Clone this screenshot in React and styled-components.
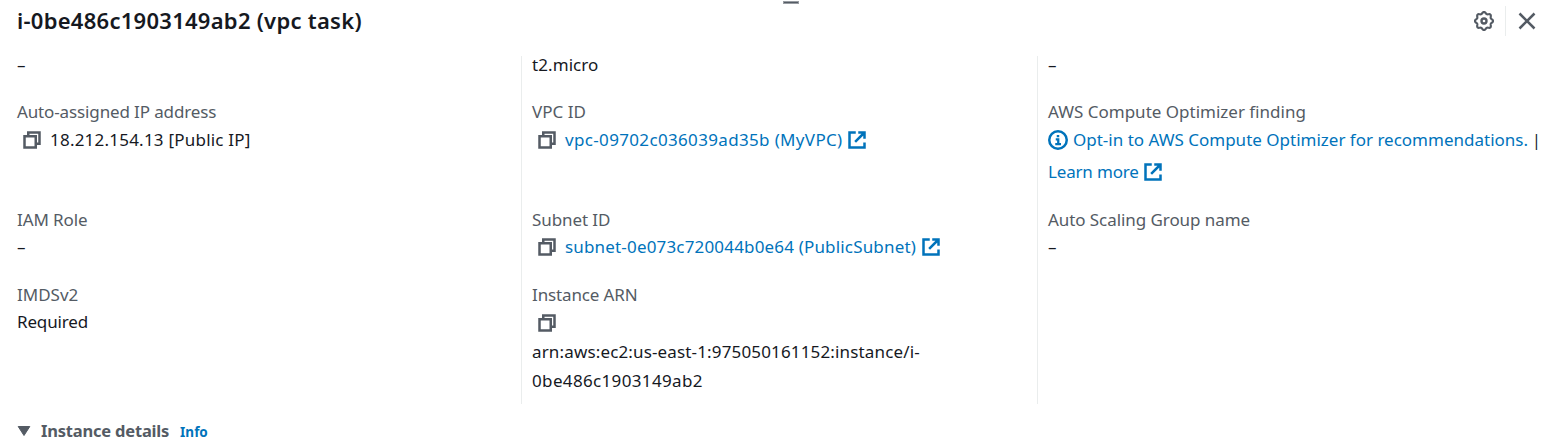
import React from 'react';
import styled, { createGlobalStyle } from 'styled-components';

const GlobalStyle = createGlobalStyle`
  *, *::before, *::after { box-sizing: border-box; }
  body {
    margin: 0;
    background: #ffffff;
    color: #16191f;
    font-family: "Noto Sans", "Open Sans", sans-serif;
    font-size: 17px;
    line-height: 27.5px;
    overflow: hidden;
  }
`;

const Panel = styled.section`
  height: 440px;
  display: flex;
  flex-direction: column;
  position: relative;
`;

const DragHandle = styled.div`
  position: absolute;
  top: 1px;
  left: 783px;
  width: 16px;
  height: 3px;
  background: #545b64;
  border: 1px solid #989ca2;
`;

const Header = styled.header`
  display: flex;
  flex: none;
  align-items: center;
  height: 42px;
  padding: 0 16px 0 17px;
`;

const Title = styled.h2`
  margin: 0;
  flex: 1;
  font-size: 22px;
  font-weight: 600;
  letter-spacing: 0.27px;
`;

const Actions = styled.div`
  display: flex;
  align-items: center;
`;

const ActionDivider = styled.span`
  width: 1px;
  height: 30px;
  margin: 0 11px;
  background: #eaeded;
`;

const Columns = styled.div`
  display: grid;
  flex: none;
  grid-template-columns: 504px 516px 1fr;
  height: 348px;
  margin: 14px 0 0 17px;
`;

const Column = styled.div`
  display: flex;
  flex-direction: column;
  gap: 20px;
  padding-left: ${(p) => (p.$divided ? 10 : 0)}px;
  border-left: ${(p) => (p.$divided ? '1px solid #eaeded' : 'none')};
`;

const Field = styled.div`
  flex: none;
  height: ${(p) => p.$height || 55}px;
`;

const Label = styled.div`
  color: #545b64;
  letter-spacing: ${(p) => p.$track || 0}px;
`;

const Value = styled.div`
  display: flex;
  align-items: center;
  height: ${(p) => p.$line || 26.5}px;
  line-height: ${(p) => p.$line || 26.5}px;
  white-space: nowrap;
`;

const Text = styled.span`
  letter-spacing: ${(p) => p.$track || 0}px;
`;

const Separator = styled.span`
  margin-left: 4px;
  font-size: 16px;
`;

const Link = styled.a`
  color: #0073bb;
  text-decoration: none;
  letter-spacing: ${(p) => p.$track || 0}px;
`;

const Icon = styled.svg`
  flex: none;
  width: 20px;
  height: 20px;
  margin: ${(p) => p.$margin || '0'};
  fill: none;
  stroke: ${(p) => p.$color || '#545b64'};
  stroke-width: 2;
`;

const Section = styled.div`
  display: flex;
  flex: none;
  align-items: center;
  height: 18px;
  margin-top: 18px;
  padding-left: 17px;
  line-height: 18px;
`;

const SectionTitle = styled.h3`
  margin: 0 11px 0 10px;
  font-size: 16.5px;
  font-weight: 700;
  color: #545b64;
  letter-spacing: -0.2px;
`;

const InfoLink = styled.a`
  padding-top: 2px;
  color: #0073bb;
  font-size: 13.5px;
  font-weight: 700;
  line-height: 16px;
`;

const CopyIcon = () => (
  <Icon viewBox="0 0 16 16" $margin="1px 8px 0 5px">
    <path d="M2 5h9v9H2z" />
    <path d="M5 5V2h9v9h-3" />
  </Icon>
);

const ExternalIcon = ({ gap = 4 }) => (
  <Icon viewBox="0 0 16 16" $color="#0073bb" $margin={`1px 0 0 ${gap}px`}>
    <path d="M7 2H2v12h12V10" />
    <path d="M9 2h5v5M14 2 6.500 9.500" />
  </Icon>
);

const InfoIcon = () => (
  <Icon viewBox="0 0 16 16" $color="#0073bb" $margin="1px 5px 0 0">
    <circle cx="8" cy="8" r="7" />
    <path d="M6.200 7.500h2v4M5.800 11.200h4.600M7 4.800h2" strokeWidth="1.800" />
  </Icon>
);

// Eight rounded lobes around the centre of a 16-unit box.
const gearOutline =
  'M' +
  Array.from({ length: 96 }, (_, i) => {
    const a = (i / 96) * Math.PI * 2;
    const r = 6.55 + 0.7 * Math.cos(8 * a);
    return `${(8 + r * Math.cos(a)).toFixed(2)} ${(8 + r * Math.sin(a)).toFixed(2)}`;
  }).join('L') +
  'Z';

const GearIcon = () => (
  <Icon viewBox="0 0 16 16">
    <path d={gearOutline} strokeWidth="1.700" strokeLinejoin="round" />
    <circle cx="8" cy="8" r="2" strokeWidth="1.900" />
  </Icon>
);

const CloseIcon = () => (
  <Icon viewBox="0 0 16 16">
    <path d="m2 2 12 12M14 2 2 14" />
  </Icon>
);

const Caret = () => (
  <svg width="14" height="12" viewBox="0 0 14 12">
    <path d="M1.200 1.500h11.600L7 10.500z" fill="#545b64" stroke="#545b64" strokeLinejoin="round" />
  </svg>
);

export default function App() {
  return (
    <Panel>
      <GlobalStyle />
      <DragHandle />
      <Header>
        <Title>i-0be486c1903149ab2 (vpc task)</Title>
        <Actions>
          <GearIcon />
          <ActionDivider />
          <CloseIcon />
        </Actions>
      </Header>
      <Columns>
        <Column>
          <Field $height={22}><Value $line={18}>–</Value></Field>
          <Field $height={88}>
            <Label $track={-0.13}>Auto-assigned IP address</Label>
            <Value $line={28}><CopyIcon /><Text $track={0.22}>18.212.154.13 [Public IP]</Text></Value>
          </Field>
          <Field>
            <Label $track={-0.1}>IAM Role</Label>
            <Value>–</Value>
          </Field>
          <Field>
            <Label>IMDSv2</Label>
            <Value><Text $track={-0.15}>Required</Text></Value>
          </Field>
        </Column>
        <Column $divided>
          <Field $height={22}><Value $line={18}><Text $track={0.08}>t2.micro</Text></Value></Field>
          <Field $height={88}>
            <Label>VPC ID</Label>
            <Value $line={28}><CopyIcon /><Link $track={0.34}>vpc-09702c036039ad35b (MyVPC)</Link><ExternalIcon /></Value>
          </Field>
          <Field>
            <Label $track={-0.1}>Subnet ID</Label>
            <Value><CopyIcon /><Link $track={0.17}>subnet-0e073c720044b0e64 (PublicSubnet)</Link><ExternalIcon gap={5} /></Value>
          </Field>
          <Field>
            <Label $track={-0.13}>Instance ARN</Label>
            <Value $line={27.5}><CopyIcon /></Value>
            <Value $line={32}><Text $track={0.15}>arn:aws:ec2:us-east-1:975050161152:instance/i-</Text></Value>
            <Value $line={25}><Text $track={0.35}>0be486c1903149ab2</Text></Value>
          </Field>
        </Column>
        <Column $divided>
          <Field $height={22}><Value $line={18}>–</Value></Field>
          <Field $height={88}>
            <Label>AWS Compute Optimizer finding</Label>
            <Value $line={28}>
              <InfoIcon />
              <Link>Opt-in to AWS Compute Optimizer for recommendations.</Link>
              <Separator>|</Separator>
            </Value>
            <Value $line={35}><Link $track={-0.17}>Learn more</Link><ExternalIcon gap={4} /></Value>
          </Field>
          <Field>
            <Label $track={-0.07}>Auto Scaling Group name</Label>
            <Value>–</Value>
          </Field>
        </Column>
      </Columns>
      <Section>
        <Caret />
        <SectionTitle>Instance details</SectionTitle>
        <InfoLink>Info</InfoLink>
      </Section>
    </Panel>
  );
}
